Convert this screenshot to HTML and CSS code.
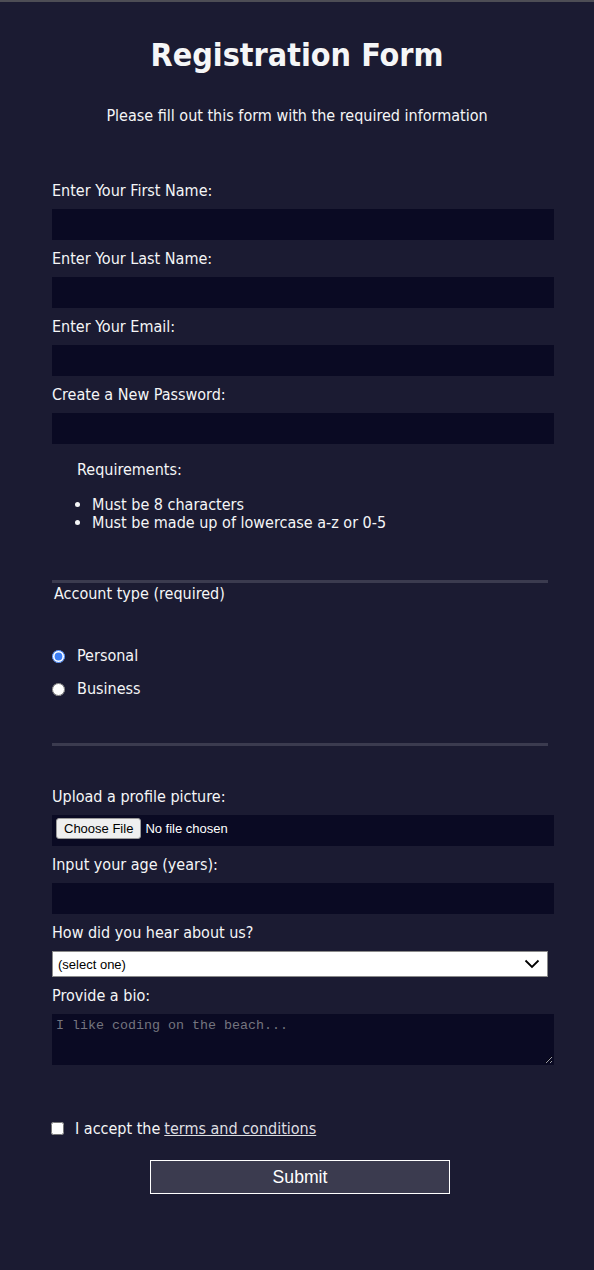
FILE: index.html
```html
<!DOCTYPE html>
<html lang="en">
<head>
    <meta charset="UTF-8">
    <meta name="viewport" content="width=device-width, initial-scale=1.0">
    <title>Registration Form</title>
    <link rel="stylesheet" href="styles.css">
</head>
<body>

    <h1>Registration Form</h1>
    <p class="intro">Please fill out this form with the required information</p>

    <form class="reg-form" action="#">
        <!-- Personal details -->
        <div class="group">
            <label for="first-name">Enter Your First Name:</label>
            <input type="text" id="first-name" class="box">
        </div>
        <div class="group">
            <label for="last-name">Enter Your Last Name:</label>
            <input type="text" id="last-name" class="box">
        </div>
        <div class="group">
            <label for="email">Enter Your Email:</label>
            <input type="email" id="email" class="box">
        </div>
        <div class="group">
            <label for="new-password">Create a New Password:</label>
            <input type="password" id="new-password" class="box">
        </div>

        <div class="requirements">
            <p class="req-title">Requirements:</p>
            <ul class="req-list">
                <li>Must be 8 characters</li>
                <li>Must be made up of lowercase a-z or 0-5</li>
            </ul>
        </div>

        <!-- Account type -->
        <div class="account">
            <div class="account-title">Account type (required)</div>
            <div class="radios">
                <label class="radio-row"><input type="radio" name="account-type" checked> Personal</label>
                <label class="radio-row"><input type="radio" name="account-type"> Business</label>
            </div>
        </div>

        <!-- Extra info -->
        <div class="extra">
            <div class="group">
                <label for="profile-picture">Upload a profile picture:</label>
                <input type="file" id="profile-picture" class="box file-box">
            </div>
            <div class="group">
                <label for="age">Input your age (years):</label>
                <input type="number" id="age" class="box">
            </div>
            <div class="group">
                <label for="referrer">How did you hear about us?</label>
                <div class="select-wrap">
                    <select id="referrer" class="select-box">
                        <option value="">(select one)</option>
                        <option value="1">freeCodeCamp News</option>
                        <option value="2">freeCodeCamp YouTube Channel</option>
                        <option value="3">freeCodeCamp Forum</option>
                        <option value="4">Other</option>
                    </select>
                    <svg class="chevron" width="16" height="10" viewBox="0 0 16 10"><path d="M1.5 1.5 L8 8 L14.5 1.5" fill="none" stroke="#000" stroke-width="1.8"/></svg>
                </div>
            </div>
            <div class="group">
                <label for="bio">Provide a bio:</label>
                <textarea id="bio" class="box bio-box" placeholder="I like coding on the beach..."></textarea>
            </div>
        </div>

        <label class="terms" for="terms">
            <input type="checkbox" id="terms" class="check"> I accept the <a href="#">terms and conditions</a>
        </label>

        <input type="submit" value="Submit" class="submit-btn">
    </form>

</body>
</html>
```

FILE: styles.css
```css
body {
    margin: 0;
    min-height: 1268px;
    background-color: #1b1b32;
    color: #f5f6f7;
    font-family: "DejaVu Sans Condensed", "DejaVu Sans", sans-serif;
    font-size: 16px;
    border-top: 2px solid #4d4d55;
}

h1 {
    margin: 0;
    padding-top: 34px;
    font-size: 32px;
    line-height: 38px;
    text-align: center;
}

.intro {
    margin: 32px 0 0;
    line-height: 19px;
    text-align: center;
}

/* Main form column */
.reg-form {
    width: 496px;
    margin: 0 0 0 52px;
    padding-top: 56px;
    display: flex;
    flex-direction: column;
}

.group {
    display: flex;
    flex-direction: column;
    gap: 9px;
    padding-bottom: 9px;
}

.group label {
    line-height: 19px;
}

.box {
    display: block;
    margin: 0;
    width: 502px;
    height: 31px;
    box-sizing: border-box;
    background-color: #0a0a23;
    border: 1px solid #0a0a23;
    color: #fff;
}

/* Password requirements */
.requirements {
    padding-top: 8px;
}

.req-title {
    margin: 0;
    padding-left: 25px;
    line-height: 18px;
}

.req-list {
    margin: 17px 0 0;
    padding-left: 40px;
    line-height: 18px;
}

/* Account type block */
.account {
    margin-top: 48px;
    border-top: 3px solid #3b3b4f;
    border-bottom: 3px solid #3b3b4f;
    padding-bottom: 44px;
}

.account-title {
    padding-left: 2px;
    padding-top: 1px;
    line-height: 19px;
}

.radios {
    display: flex;
    flex-direction: column;
    gap: 13px;
    padding-top: 43px;
}

.radio-row {
    display: flex;
    align-items: center;
    gap: 12px;
    line-height: 20px;
}

.radio-row input {
    margin: 0;
    width: 13px;
    height: 13px;
    accent-color: #3b7ef6;
}

.extra {
    padding-top: 41px;
}

.file-box {
    padding: 2px 3px;
    font-family: "Liberation Sans", Arial, sans-serif;
    font-size: 13px;
}

.file-box::file-selector-button {
    font-family: "Liberation Sans", Arial, sans-serif;
    font-size: 13px;
    color: #000;
    background-color: #efefef;
    border: 1px solid #9a9a9a;
    border-radius: 3px;
    padding: 2px 7px;
    margin-right: 4px;
}

.select-wrap {
    position: relative;
    width: 496px;
}

.select-box {
    display: block;
    width: 100%;
    height: 26px;
    margin: 0;
    padding: 0 5px;
    -webkit-appearance: none;
    appearance: none;
    background-color: #fff;
    border: 1px solid #8a8a8a;
    border-radius: 0;
    color: #000;
    font-family: "Liberation Sans", Arial, sans-serif;
    font-size: 13px;
}

.chevron {
    position: absolute;
    right: 8px;
    top: 8px;
    pointer-events: none;
}

.bio-box {
    height: 51px;
    padding: 3px 3px;
    resize: vertical;
    font-family: "Liberation Mono", monospace;
    font-size: 13.33px;
}

.bio-box::placeholder {
    color: #75757f;
}

/* Terms and submit */
.terms {
    display: flex;
    align-items: center;
    gap: 11px;
    margin: 45px 0 0 -1px;
    line-height: 19px;
}

.check {
    margin: 0;
    width: 13px;
    height: 13px;
}

.terms a {
    color: #dfdfe2;
    margin-left: -7px;
}

.submit-btn {
    display: block;
    width: 300px;
    height: 34px;
    margin: 22px auto 0;
    background-color: #3b3b4f;
    border: 1px solid #fff;
    color: #fff;
    font-family: "Liberation Sans", Arial, sans-serif;
    font-size: 17.6px;
}
```
